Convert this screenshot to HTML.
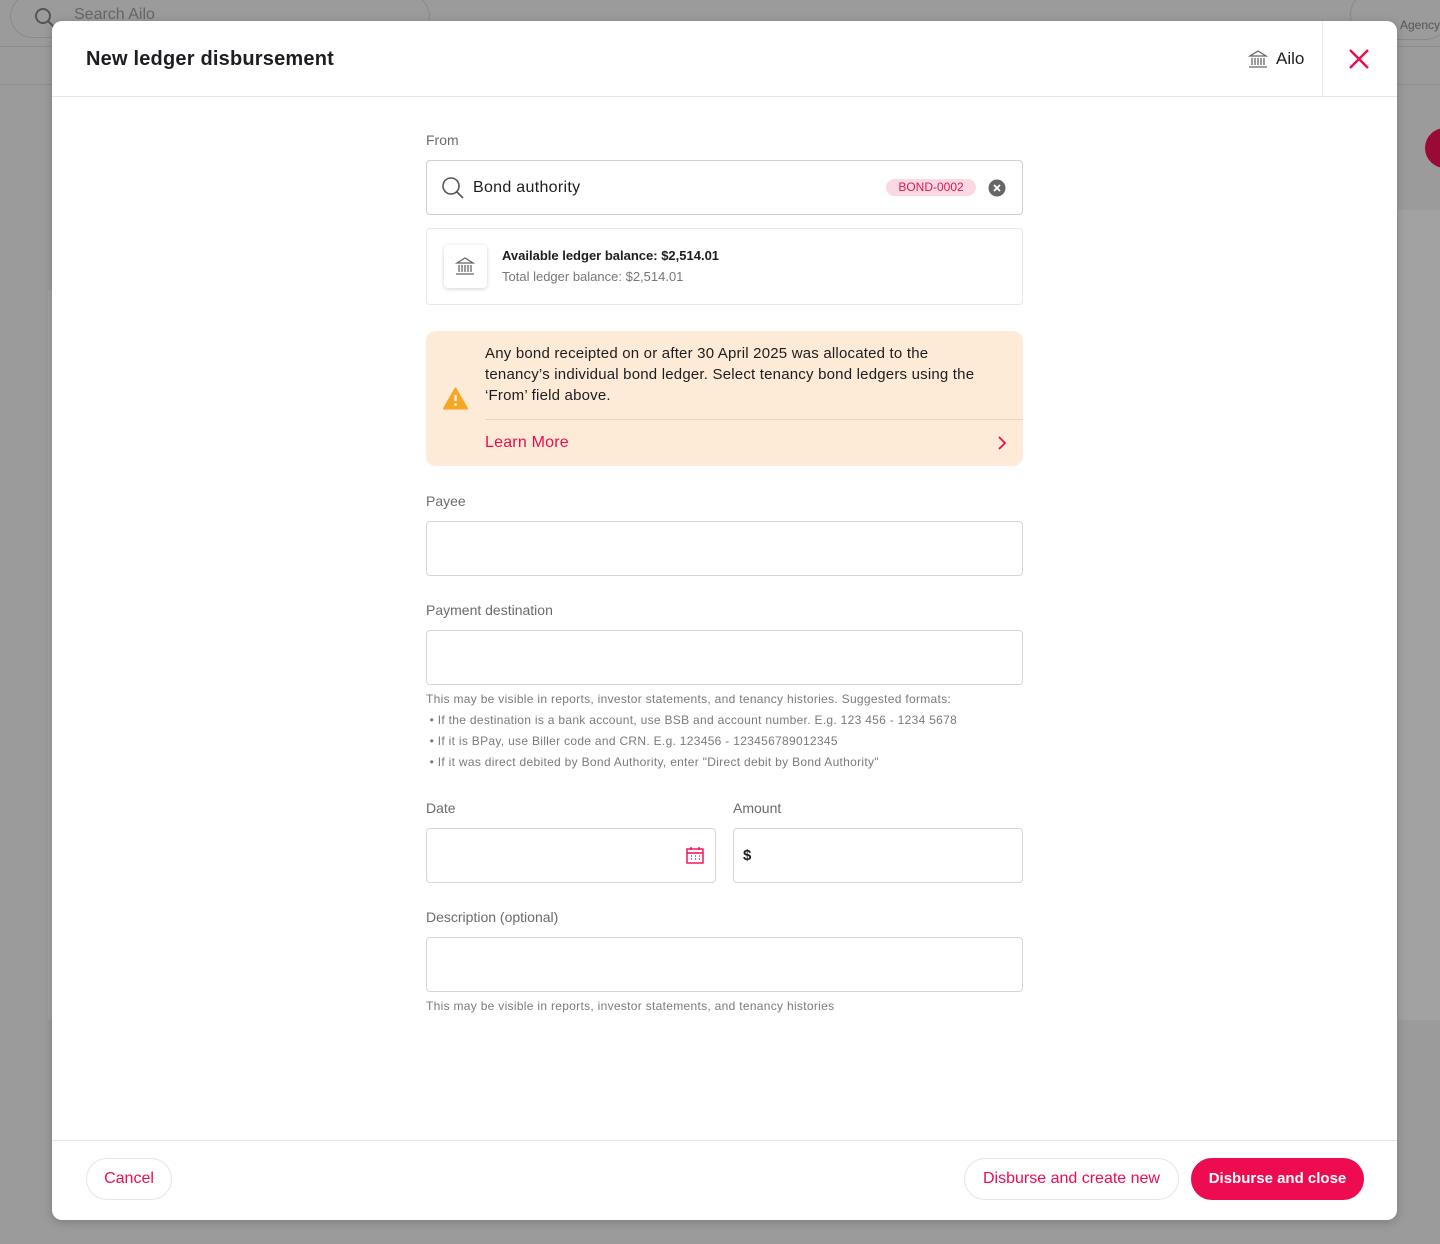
<!DOCTYPE html>
<html><head><meta charset="utf-8">
<style>
*{box-sizing:border-box;margin:0;padding:0}
html,body{width:1440px;height:1244px;overflow:hidden}
body{background:#9b9b9b;font-family:"Liberation Sans",sans-serif;position:relative;color:#1c1d20}
.a{position:absolute}
.lbl{position:absolute;left:426px;font-size:14px;color:#6b6b6b}
.inp{position:absolute;left:426px;width:597px;height:55px;border:1px solid #d6d6d6;border-radius:4px;background:#fff}
.hint{position:absolute;left:426px;font-size:12px;color:#7a7a7a;line-height:21px;letter-spacing:.3px;white-space:nowrap}
.btn{position:absolute;height:42px;border-radius:21px;font-size:16px;line-height:40px;text-align:center;color:#ee0b4f;border:1px solid #e6e6e6;background:#fff}
</style></head><body>
<div class="a" style="left:10px;top:-6px;width:420px;height:44px;border:1px solid #8a8a8a;border-radius:22px"></div>
<svg class="a" style="left:33px;top:6px" width="24" height="24" viewBox="0 0 24 24" fill="none" stroke="#555" stroke-width="2"><circle cx="10" cy="10" r="7"/><path d="M15 15l6 6"/></svg>
<div class="a" style="left:74px;top:6px;font-size:16px;color:#666">Search Ailo</div>
<div class="a" style="left:0;top:46px;width:1440px;height:1px;background:#8e8e8e"></div>
<div class="a" style="left:0;top:84px;width:1440px;height:1px;background:#8e8e8e"></div>
<div class="a" style="left:1350px;top:-10px;width:100px;height:50px;border:1px solid #8a8a8a;border-radius:25px"></div>
<div class="a" style="left:1400px;top:18px;font-size:12px;color:#555">Agency</div>
<div class="a" style="left:1425px;top:128px;width:40px;height:40px;border-radius:50%;background:#9a0a36"></div>
<div class="a" style="left:1398px;top:210px;width:42px;height:810px;background:#a2a2a2"></div>
<div class="a" style="left:48px;top:290px;width:6px;height:730px;background:#a2a2a2"></div>

<div class="a" style="left:52px;top:21px;width:1345px;height:1199px;background:#fff;border-radius:10px;box-shadow:0 2px 10px rgba(0,0,0,.2)"></div>
<div class="a" style="left:86px;top:48px;font-size:20px;font-weight:bold;color:#1c1d20;letter-spacing:.2px">New ledger disbursement</div>
<svg class="a" style="left:1248px;top:50px" width="20" height="18" viewBox="0 0 20 18" fill="none" stroke="#666" stroke-width="1.3"><path d="M2 6L10 1l8 5z"/><path d="M4 8v7M7 8v7M10 8v7M13 8v7M16 8v7M1 17h18"/></svg>
<div class="a" style="left:1276px;top:49px;font-size:17px;color:#1c1d20">Ailo</div>
<div class="a" style="left:1322px;top:21px;width:1px;height:75px;background:#e6e6e6"></div>
<svg class="a" style="left:1348px;top:48px" width="22" height="22" viewBox="0 0 22 22" stroke="#ee0b4f" stroke-width="2.4"><path d="M2 2l18 18M20 2L2 20"/></svg>
<div class="a" style="left:52px;top:96px;width:1345px;height:1px;background:#e6e6e6"></div>

<div class="lbl" style="top:132px">From</div>
<div class="inp" style="top:160px;border-color:#cfcfcf"></div>
<svg class="a" style="left:441px;top:176px" width="24" height="24" viewBox="0 0 24 24" fill="none" stroke="#555" stroke-width="1.6"><circle cx="10" cy="10" r="8"/><path d="M16 16l6 6"/></svg>
<div class="a" style="left:473px;top:179px;font-size:16px;color:#1c1d20;letter-spacing:.3px">Bond authority</div>
<div class="a" style="left:886px;top:179px;width:90px;height:17px;border-radius:9px;background:#fbd9e2;color:#d81a52;font-size:12px;line-height:17px;text-align:center">BOND-0002</div>
<svg class="a" style="left:988px;top:179px" width="18" height="18" viewBox="0 0 18 18"><circle cx="9" cy="9" r="8.5" fill="#666"/><path d="M6 6l6 6M12 6l-6 6" stroke="#fff" stroke-width="1.8"/></svg>

<div class="a" style="left:426px;top:228px;width:597px;height:77px;border:1px solid #e8e8e8;border-radius:4px"></div>
<div class="a" style="left:444px;top:245px;width:43px;height:43px;border-radius:4px;background:#fff;box-shadow:0 1px 4px rgba(0,0,0,.18)"></div>
<svg class="a" style="left:455px;top:257px" width="20" height="18" viewBox="0 0 20 18" fill="none" stroke="#666" stroke-width="1.3"><path d="M2 6L10 1l8 5z"/><path d="M4 8v7M7 8v7M10 8v7M13 8v7M16 8v7M1 17h18"/></svg>
<div class="a" style="left:502px;top:248px;font-size:13px;font-weight:bold;color:#1c1d20">Available ledger balance: $2,514.01</div>
<div class="a" style="left:502px;top:269px;font-size:13px;color:#777">Total ledger balance: $2,514.01</div>

<div class="a" style="left:426px;top:331px;width:597px;height:135px;border-radius:10px;background:#fdebd7"></div>
<div class="a" style="left:485px;top:343px;width:535px;font-size:15px;line-height:21px;color:#1c1d20;white-space:nowrap;letter-spacing:.2px">Any bond receipted on or after 30 April 2025 was allocated to the<br>tenancy’s individual bond ledger. Select tenancy bond ledgers using the<br>‘From’ field above.</div>
<svg class="a" style="left:443px;top:387px" width="25" height="23" viewBox="0 0 25 23"><path d="M12.5 1.5L24 21.5H1z" fill="#f5a623" stroke="#f5a623" stroke-width="2" stroke-linejoin="round"/><path d="M12.5 8v6" stroke="#fff" stroke-width="2.2"/><circle cx="12.5" cy="17.5" r="1.3" fill="#fff"/></svg>
<div class="a" style="left:485px;top:419px;width:538px;height:1px;background:#e6d6c4"></div>
<div class="a" style="left:485px;top:434px;font-size:16px;color:#ee0b4f;letter-spacing:.2px">Learn More</div>
<svg class="a" style="left:997px;top:436px" width="10" height="14" viewBox="0 0 10 14" fill="none" stroke="#ee0b4f" stroke-width="1.8"><path d="M2 1l6 6-6 6"/></svg>

<div class="lbl" style="top:493px">Payee</div>
<div class="inp" style="top:521px"></div>
<div class="lbl" style="top:602px">Payment destination</div>
<div class="inp" style="top:630px"></div>
<div class="hint" style="top:689px">This may be visible in reports, investor statements, and tenancy histories. Suggested formats:<br>&nbsp;• If the destination is a bank account, use BSB and account number. E.g. 123 456 - 1234 5678<br>&nbsp;• If it is BPay, use Biller code and CRN. E.g. 123456 - 123456789012345<br>&nbsp;• If it was direct debited by Bond Authority, enter "Direct debit by Bond Authority"</div>

<div class="lbl" style="top:800px">Date</div>
<div class="inp" style="top:828px;width:290px"></div>
<svg class="a" style="left:686px;top:846px" width="18" height="18" viewBox="0 0 18 18" fill="none" stroke="#ee0b4f" stroke-width="1.4"><rect x="1" y="3" width="16" height="14"/><path d="M1 7h16M5 1v3M13 1v3"/><path d="M5 10h1M9 10h1M13 10h1M5 13h1M9 13h1M13 13h1" stroke-width="1.2"/></svg>
<div class="lbl" style="top:800px;left:733px">Amount</div>
<div class="inp" style="top:828px;left:733px;width:290px"></div>
<div class="a" style="left:743px;top:847px;font-size:15px;color:#1c1d20;font-weight:bold">$</div>

<div class="lbl" style="top:909px">Description (optional)</div>
<div class="inp" style="top:937px"></div>
<div class="hint" style="top:996px">This may be visible in reports, investor statements, and tenancy histories</div>

<div class="a" style="left:52px;top:1140px;width:1345px;height:1px;background:#e6e6e6"></div>
<div class="btn" style="left:86px;top:1158px;width:86px">Cancel</div>
<div class="btn" style="left:964px;top:1158px;width:215px">Disburse and create new</div>
<div class="btn" style="left:1191px;top:1158px;width:173px;background:#ee0b4f;border-color:#ee0b4f;color:#fff;font-weight:bold;font-size:15px">Disburse and close</div>
</body></html>
